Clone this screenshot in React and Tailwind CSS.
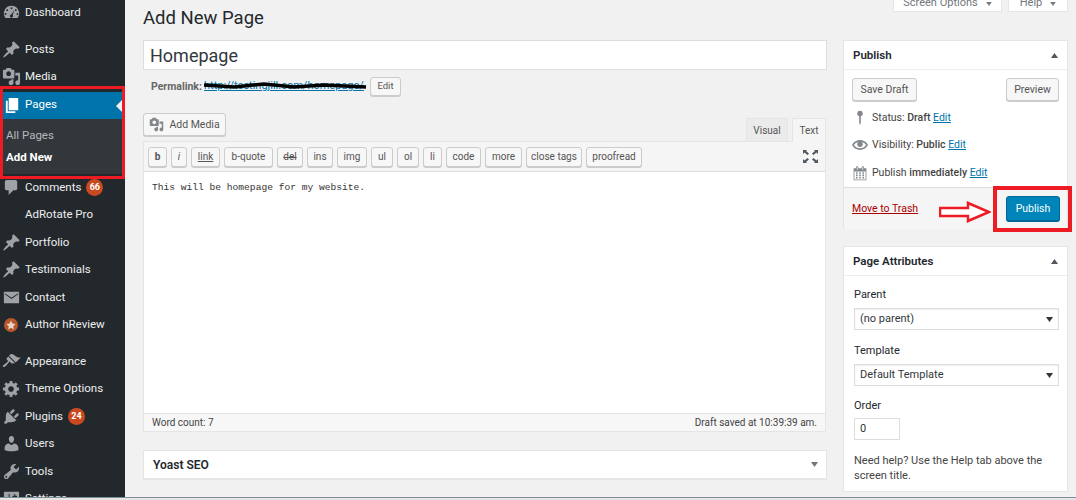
import React from 'react';

const paths = {
  dashboard: 'M10 3a8 8 0 0 0-6.400 12.800h12.800A8 8 0 0 0 10 3zm0 1.500a1 1 0 1 1 0 2 1 1 0 0 1 0-2zM5.500 6.500a1 1 0 1 1 0 2 1 1 0 0 1 0-2zm9 0a1 1 0 1 1 0 2 1 1 0 0 1 0-2zM3.700 10.500a1 1 0 1 1 0 2 1 1 0 0 1 0-2zm12.600 0a1 1 0 1 1 0 2 1 1 0 0 1 0-2zM13 7.500l-1.800 5a1.700 1.700 0 1 1-1.500-.5z',
  post: 'M10.440 3.020l1.820-1.820 6.360 6.350-1.830 1.820c-1.050-.68-2.480-.57-3.410.36l-.75.75c-.92.93-1.040 2.350-.35 3.410l-1.830 1.820-2.410-2.410-2.800 2.790c-.42.42-3.380 2.710-3.800 2.290s1.860-3.390 2.280-3.810l2.790-2.790L4.100 9.360l1.830-1.820c1.050.69 2.480.57 3.400-.36l.75-.75c.93-.92 1.050-2.350.36-3.410z',
  media: 'M13 11V4c0-.55-.45-1-1-1h-1.670L9 1H5L3.670 3H2c-.55 0-1 .45-1 1v7c0 .55.45 1 1 1h10c.55 0 1-.45 1-1zM7 4.500c1.380 0 2.500 1.120 2.500 2.500S8.380 9.500 7 9.500 4.500 8.380 4.500 7 5.620 4.500 7 4.500zM14 6h5v10.500c0 1.380-1.120 2.500-2.500 2.500S14 17.880 14 16.500s1.120-2.500 2.500-2.500c.17 0 .34.020.5.050V9h-3V6zm-4 8.050V13h2v3.500c0 1.380-1.120 2.500-2.500 2.500S7 17.880 7 16.500 8.120 14 9.500 14c.17 0 .34.020.5.050z',
  page: 'M6 15V2h10v13H6zm-1 1h8v2H3V5h2v11z',
  comments: 'M5 2h9c1.100 0 2 .9 2 2v7c0 1.100-.9 2-2 2h-2l-5 5v-5H5c-1.100 0-2-.9-2-2V4c0-1.100.9-2 2-2z',
  email: 'M2 4h16v12H2zM3 5.500v1.200l7 4.800 7-4.800V5.500l-7 4.700z',
  appearance: 'M14.480 11.060L7.410 3.990l1.500-1.500c.5-.56 2.300-.47 3.510.32 1.210.8 1.430 1.280 2.910 2.100 1.180.64 2.450 1.260 4.450.85zm-.71.71L6.700 4.700 4.930 6.470c-.39.39-.39 1.020 0 1.410l1.060 1.060c.39.39.39 1.030 0 1.420-.6.6-1.430 1.110-2.210 1.690-.35.26-.7.53-1.010.84C1.430 13.230.4 14.850 1.100 15.550c.71.7 2.310-.33 3.650-1.670.31-.31.58-.66.85-1.010.57-.79 1.080-1.610 1.690-2.210.39-.39 1.020-.39 1.410 0l1.060 1.060c.39.39 1.020.39 1.410 0z',
  gear: 'M18 12h-2.180c-.17.7-.44 1.350-.81 1.930l1.540 1.540-2.100 2.100-1.540-1.540c-.58.360-1.230.640-1.910.810V19H8v-2.180c-.68-.170-1.330-.450-1.910-.810l-1.540 1.540-2.120-2.120 1.540-1.540c-.36-.58-.64-1.230-.81-1.910H1V9.020h2.170c.170-.7.440-1.350.810-1.930L2.440 5.550l2.120-2.120L6.100 4.970c.580-.360 1.230-.640 1.910-.810V2h3v2.180c.68.170 1.330.450 1.910.810l1.540-1.540 2.120 2.120-1.540 1.540c.36.58.64 1.230.81 1.910H18V12zm-8.500 1.500c1.660 0 3-1.340 3-3s-1.340-3-3-3-3 1.340-3 3 1.340 3 3 3z',
  plugins: 'M13.110 4.360L9.870 7.600 8 5.730l3.240-3.240c.35-.34 1.050-.2 1.560.32.52.51.66 1.210.31 1.550zm-8 1.770l.91-1.120 9.010 9.010-1.190.84c-.71.71-2.630 1.160-3.820 1.160H6.140L4.900 17.260c-.59.59-1.540.59-2.120 0-.59-.58-.59-1.530 0-2.120l1.240-1.240v-3.880c0-1.130.4-3.190 1.090-3.890zm7.260 3.970l3.240-3.240c.34-.35 1.040-.21 1.550.31.52.51.66 1.210.31 1.550l-3.240 3.250z',
  users: 'M10 9.250c-2.270 0-2.730-3.440-2.730-3.440C7 4.020 7.820 2 9.970 2c2.160 0 2.980 2.020 2.710 3.810 0 0-.41 3.440-2.680 3.440zm0 2.570L12.720 10c2.390 0 4.520 2.330 4.520 4.530v2.490s-3.650 1.130-7.240 1.130c-3.650 0-7.240-1.130-7.240-1.130v-2.490c0-2.250 1.940-4.480 4.470-4.480z',
  tools: 'M16.680 9.770c-1.340 1.340-3.300 1.670-4.950.99l-5.410 6.520c-.99.99-2.590.99-3.580 0s-.99-2.590 0-3.570l6.520-5.420c-.68-1.650-.35-3.610.99-4.950 1.280-1.280 3.120-1.620 4.720-1.060l-2.890 2.890 2.820 2.820 2.860-2.870c.53 1.580.18 3.390-1.080 4.650zM3.810 16.210c.4.39 1.040.39 1.430 0 .4-.4.4-1.040 0-1.430-.39-.4-1.030-.4-1.430 0-.39.39-.39 1.030 0 1.430z',
  settings: 'M18 16V4c0-.55-.45-1-1-1H3c-.55 0-1 .45-1 1v12c0 .55.45 1 1 1h14c.55 0 1-.45 1-1zM8 11h1c.55 0 1 .45 1 1s-.45 1-1 1H8v1.500c0 .28-.22.5-.5.5s-.5-.22-.5-.5V13H6c-.55 0-1-.45-1-1s.45-1 1-1h1V5.500c0-.28.22-.5.5-.5s.5.22.5.5V11zm5-2h-1c-.55 0-1-.45-1-1s.45-1 1-1h1V5.500c0-.28.22-.5.5-.5s.5.22.5.5V7h1c.55 0 1 .45 1 1s-.45 1-1 1h-1v5.500c0 .28-.22.5-.5.5s-.5-.22-.5-.5V9z',
  pin: 'M10 1a3.500 3.500 0 0 1 1 6.860V16l-1 3-1-3V7.860A3.500 3.500 0 0 1 10 1z',
  eye: 'M19.700 9.400C17.700 6 14 3.900 10 3.900S2.300 6 .3 9.400L0 10l.3.6c2 3.400 5.700 5.500 9.700 5.500s7.700-2.100 9.700-5.500l.3-.6-.3-.6zM10 14.100c-3.100 0-6-1.600-7.700-4.100C3.600 8 5.700 6.600 8 6.100c-.9.6-1.500 1.700-1.500 2.900 0 1.900 1.600 3.500 3.500 3.500s3.500-1.600 3.500-3.500c0-1.200-.6-2.300-1.500-2.900 2.300.5 4.400 1.900 5.700 3.900-1.700 2.500-4.600 4.100-7.700 4.100z',
  calendar: 'M15 4h3v15H2V4h3V3c0-.41.15-.76.44-1.060.29-.29.65-.44 1.060-.44s.77.15 1.060.44c.29.3.44.65.44 1.060v1h4V3c0-.41.15-.76.44-1.060.29-.29.65-.44 1.060-.44s.77.15 1.060.44c.29.3.44.65.44 1.060v1zM6 3v2.500c0 .14.05.26.15.35.09.1.21.15.35.15s.26-.05.35-.15c.1-.09.15-.21.15-.35V3c0-.14-.05-.26-.15-.35-.09-.1-.21-.15-.35-.15s-.26.05-.35.15c-.1.09-.15.21-.15.35zm7 0v2.500c0 .14.05.26.14.35.1.1.22.15.36.15s.26-.05.36-.15c.09-.09.14-.21.14-.35V3c0-.14-.05-.26-.14-.35-.1-.1-.22-.15-.36-.15s-.26.05-.36.15c-.09.09-.14.21-.14.35zm4 15V8H3v10h14zM7 9v2H5V9h2zm2 0h2v2H9V9zm4 2V9h2v2h-2zm-6 1v2H5v-2h2zm2 0h2v2H9v-2zm4 2v-2h2v2h-2zm-6 1v2H5v-2h2zm4 2H9v-2h2v2zm4 0h-2v-2h2v2z',
};

function Dash({ name, size = 19, color = '#9ea3a8' }) {
  return (
    <svg width={size} height={size} viewBox="0 0 20 20" fill={color} fillRule="evenodd">
      <path d={paths[name]} />
    </svg>
  );
}

function Dot() {
  return (
    <div className="w-[14px] h-[14px] rounded-full bg-[#b5562b] flex items-center justify-center ml-[2px]">
      <svg width="10" height="10" viewBox="0 0 20 20" fill="#e8d4c8">
        <path d="M10 1l2.800 6 6.500.8-4.800 4.500 1.300 6.500L10 15.500l-5.800 3.300 1.300-6.500L.7 7.800 7.200 7z" />
      </svg>
    </div>
  );
}

const topItems = [
  { name: 'Posts', icon: <Dash name="post" /> },
  { name: 'Media', icon: <Dash name="media" /> },
];

const midItems = [
  { name: 'Comments', badge: '66', icon: <Dash name="comments" /> },
  { name: 'AdRotate Pro' },
  { name: 'Portfolio', icon: <Dash name="post" /> },
  { name: 'Testimonials', icon: <Dash name="post" /> },
  { name: 'Contact', icon: <Dash name="email" /> },
  { name: 'Author hReview', icon: <Dot /> },
];

const lowItems = [
  { name: 'Appearance', icon: <Dash name="appearance" /> },
  { name: 'Theme Options', icon: <Dash name="gear" /> },
  { name: 'Plugins', badge: '24', icon: <Dash name="plugins" /> },
  { name: 'Users', icon: <Dash name="users" /> },
  { name: 'Tools', icon: <Dash name="tools" /> },
  { name: 'Settings', icon: <Dash name="settings" /> },
];

const quicktags = [
  ['b', 'w-[19px] font-bold'],
  ['i', 'w-[16px] italic'],
  ['link', 'w-[29px] underline'],
  ['b-quote', 'w-[49px]'],
  ['del', 'w-[26px] line-through'],
  ['ins', 'w-[26px]'],
  ['img', 'w-[30px]'],
  ['ul', 'w-[22px]'],
  ['ol', 'w-[22px]'],
  ['li', 'w-[19px]'],
  ['code', 'w-[35px]'],
  ['more', 'w-[37px]'],
  ['close tags', 'w-[56px]'],
  ['proofread', 'w-[56px]'],
];

function MenuRow({ item }) {
  return (
    <div className="h-[27.5px] flex items-center text-[#eeeeee]">
      <div className="w-[25px] pl-[2px] flex justify-start shrink-0">{item.icon}</div>
      <span>{item.name}</span>
      {item.badge && (
        <span className="ml-[5px] h-[17px] w-[17px] rounded-full bg-[#ca4a1f] text-white text-[9px] font-bold flex items-center justify-center">
          {item.badge}
        </span>
      )}
    </div>
  );
}

function Btn({ className, children }) {
  return (
    <div className={`flex items-center justify-center bg-[#f7f7f7] border border-[#cccccc] rounded-[3px] shadow-[0_1px_0_#cccccc] text-[#555555] ${className}`}>
      {children}
    </div>
  );
}

function Select({ children, className }) {
  return (
    <div className={`h-[22px] w-[205px] bg-white border border-[#dddddd] shadow-[inset_0_1px_2px_rgba(0,0,0,0.07)] flex items-center justify-between pl-[5px] pr-[5px] pt-[1px] text-[#32373c] ${className}`}>
      <span>{children}</span>
      <svg width="7" height="5" viewBox="0 0 7 5"><path d="M0 0h7L3.500 5z" fill="#32373c" /></svg>
    </div>
  );
}

export default function App() {
  return (
    <div className="relative flex w-[1076px] h-[500px] overflow-hidden bg-[#f1f1f1] text-[11px] text-[#444444] font-['Roboto','Liberation_Sans',sans-serif]">
      {/* Sidebar */}
      <aside className="relative w-[125px] shrink-0 bg-[#23282d] text-[11.5px]">
        <div className="h-[27.5px] -mt-[1px] flex items-center text-[#eeeeee]">
          <div className="w-[25px] pl-[2px] shrink-0"><Dash name="dashboard" /></div>
          <span>Dashboard</span>
        </div>
        <div className="h-[9px]" />
        {topItems.map((item) => <MenuRow key={item.name} item={item} />)}
        <div className="h-[27px] mt-[1px] flex items-center bg-[#0073aa] text-white relative">
          <div className="w-[25px] pl-[3px] shrink-0"><Dash name="page" color="#ffffff" /></div>
          <span>Pages</span>
          <div className="absolute right-[3px] top-[8px] w-0 h-0 border-y-[6px] border-y-transparent border-r-[6px] border-r-[#f1f1f1]" />
        </div>
        <div className="h-[55px] bg-[#32373c] pl-[6px] pt-[6px]">
          <div className="h-[22px] flex items-center text-[#b4b9be]">All Pages</div>
          <div className="h-[22px] flex items-center text-white font-bold">Add New</div>
        </div>
        {midItems.map((item) => <MenuRow key={item.name} item={item} />)}
        <div className="h-[9px]" />
        {lowItems.map((item) => <MenuRow key={item.name} item={item} />)}

        {/* red annotation */}
        <div className="absolute left-0 top-[86px] w-[125px] h-[93px] border-[3px] border-[#ed1c24]" />
      </aside>

      <div className="flex pl-[18px] gap-[16px]">
        {/* Main column */}
        <main className="w-[684px] shrink-0">
          <h1 className="h-[40px] text-[18.5px] leading-[36px] text-[#23282d]">Add New Page</h1>
          <div className="h-[30px] bg-white border border-[#dddddd] flex items-center pl-[6px] text-[18px] text-[#32373c]">Homepage</div>
          <div className="h-[19px] mt-[7px] pl-[8px] flex items-center text-[#666666]">
            <span className="font-bold text-[10.500px] w-[53px] shrink-0">Permalink:</span>
            <span className="relative w-[163px] text-[#0073aa] underline text-[11px] whitespace-nowrap">
              http://testingjill.com/homepage/
              <svg className="absolute left-0 top-[3px]" width="163" height="10" viewBox="0 0 163 10">
                <path d="M0 4 L30 6 L60 3 L90 6 L120 4 L162 6" stroke="#000000" strokeWidth="3.500" fill="none" />
              </svg>
            </span>
            <Btn className="ml-[3px] w-[31px] h-[19px] text-[9.500px]">Edit</Btn>
          </div>

          <div className="mt-[17px] h-[28px] flex justify-between items-end">
            <Btn className="w-[83px] h-[23px] mb-[5px] gap-[5px] text-[10.500px]">
              <Dash name="media" size={15} color="#82878c" />
              Add Media
            </Btn>
            <div className="flex gap-[4px] mr-[1px] text-[10px]">
              <div className="w-[42px] h-[23px] bg-[#ebebeb] border border-[#e5e5e5] border-b-0 text-[#555555] flex items-center justify-center">Visual</div>
              <div className="w-[34px] h-[24px] bg-[#f5f5f5] border border-[#e5e5e5] border-b-0 text-[#555555] flex items-center justify-center -mb-px relative">Text</div>
            </div>
          </div>

          <div className="h-[291px] border border-[#e5e5e5] bg-white flex flex-col w-[683px]">
            <div className="h-[30px] shrink-0 bg-[#f5f5f5] border-b border-[#dddddd] flex items-center pl-[4px] pr-[7px] gap-[4px]">
              {quicktags.map(([label, cls]) => (
                <Btn key={label} className={`h-[20px] shrink-0 text-[10px] ${cls}`}>{label}</Btn>
              ))}
              <svg className="ml-auto" width="15" height="13" viewBox="0 0 15 13" fill="#50575e">
                <path d="M0 0h4L3 1l3 2.500-1.500 1.500L1.500 2.500 0 4zM15 0h-4l1 1-3 2.500 1.500 1.500 3-2.500L15 4zM0 13h4L3 12l3-2.500L4.500 8l-3 2.500L0 9zM15 13h-4l1-1-3-2.500L10.500 8l3 2.500L15 9z" />
              </svg>
            </div>
            <div className="flex-1 pl-[8px] pt-[9px] font-['Liberation_Mono',monospace] text-[9.600px] leading-[14px] text-[#333333]">
              This will be homepage for my website.
            </div>
            <div className="h-[18px] shrink-0 bg-[#f7f7f7] border-t border-[#e5e5e5] flex items-center justify-between px-[8px] text-[10px] text-[#444444]">
              <span>Word count: 7</span>
              <span>Draft saved at 10:39:39 am.</span>
            </div>
          </div>

          <div className="mt-[18px] h-[29px] bg-white border border-[#e5e5e5] shadow-[0_1px_1px_rgba(0,0,0,0.04)] flex items-center justify-between pl-[9px] pr-[8px] text-[12px] font-semibold text-[#23282d]">
            <span>Yoast SEO</span>
            <svg width="7" height="5" viewBox="0 0 7 5"><path d="M0 0h7L3.500 5z" fill="#72777c" /></svg>
          </div>
        </main>

        {/* Right column */}
        <div className="w-[225px] shrink-0">
          <div className="h-[12px] flex justify-end gap-[6px] mb-[28px]">
            <div className="w-[109px] bg-white border border-t-0 border-[#e5e5e5] text-[#72777c] flex items-end justify-center gap-[8px] overflow-hidden pb-[2px] leading-[13px]">
              Screen Options
              <svg className="mb-[3px]" width="6" height="4" viewBox="0 0 7 5"><path d="M0 0h7L3.500 5z" fill="#72777c" /></svg>
            </div>
            <div className="w-[60px] bg-white border border-t-0 border-[#e5e5e5] text-[#72777c] flex items-end justify-center gap-[8px] overflow-hidden pb-[2px] leading-[13px]">
              Help
              <svg className="mb-[3px]" width="6" height="4" viewBox="0 0 7 5"><path d="M0 0h7L3.500 5z" fill="#72777c" /></svg>
            </div>
          </div>

          <section className="relative h-[189px] bg-white border border-[#e5e5e5] flex flex-col text-[10.500px]">
            <div className="h-[29px] shrink-0 border-b border-[#eeeeee] flex items-center justify-between pl-[9px] pr-[9px] pt-[1px] text-[11.500px] font-semibold text-[#23282d]">
              <span>Publish</span>
              <svg width="7" height="5" viewBox="0 0 7 5"><path d="M0 5h7L3.500 0z" fill="#50575e" /></svg>
            </div>
            <div className="flex-1 pl-[8px] pr-[8px] pt-[8px]">
              <div className="flex justify-between">
                <Btn className="w-[65px] h-[23px]">Save Draft</Btn>
                <Btn className="w-[53px] h-[23px]">Preview</Btn>
              </div>
              <div className="mt-[3px] flex flex-col text-[#444444]">
                <div className="h-[27.500px] flex items-center">
                  <div className="w-[20px] shrink-0"><Dash name="pin" size={16} color="#82878c" /></div>
                  <span>Status: <b className="font-medium">Draft</b> <a className="text-[#0073aa] underline">Edit</a></span>
                </div>
                <div className="h-[27.500px] flex items-center">
                  <div className="w-[20px] shrink-0"><Dash name="eye" size={16} color="#82878c" /></div>
                  <span>Visibility: <b className="font-medium">Public</b> <a className="text-[#0073aa] underline">Edit</a></span>
                </div>
                <div className="h-[27.500px] flex items-center">
                  <div className="w-[20px] shrink-0"><Dash name="calendar" size={16} color="#82878c" /></div>
                  <span>Publish <b className="font-medium">immediately</b> <a className="text-[#0073aa] underline">Edit</a></span>
                </div>
              </div>
            </div>
            <div className="h-[42px] shrink-0 bg-[#f5f5f5] border-t border-[#dddddd] flex items-center justify-between pl-[8px] pr-[7px] pt-[1px]">
              <a className="text-[#a00] underline">Move to Trash</a>
              <div className="w-[54px] h-[25px] rounded-[3px] bg-[#0085ba] border border-[#006799] shadow-[0_1px_0_#006799] text-white flex items-center justify-center">Publish</div>
            </div>
            {/* red annotation */}
            <div className="absolute left-[149px] top-[145px] w-[79px] h-[46px] border-[4px] border-[#ed1c24]" />
            <svg className="absolute left-[95px] top-[160px]" width="52" height="22" viewBox="0 0 52 22">
              <path d="M1 7H29V2L50 11L29 20V15H1z" fill="#ffffff" stroke="#ed1c24" strokeWidth="2.500" />
            </svg>
          </section>

          <section className="mt-[17px] h-[246px] bg-white border border-[#e5e5e5]">
            <div className="h-[29px] border-b border-[#eeeeee] flex items-center justify-between pl-[9px] pr-[9px] pt-[1px] text-[11.500px] font-semibold text-[#23282d]">
              <span>Page Attributes</span>
              <svg width="7" height="5" viewBox="0 0 7 5"><path d="M0 5h7L3.500 0z" fill="#50575e" /></svg>
            </div>
            <div className="pl-[10px] pt-[11px] text-[#444444]">
              <div className="h-[15px] leading-[15px] text-[#23282d]">Parent</div>
              <Select className="mt-[6px]">(no parent)</Select>
              <div className="h-[15px] leading-[15px] mt-[13px] text-[#23282d]">Template</div>
              <Select className="mt-[6px]">Default Template</Select>
              <div className="h-[15px] leading-[15px] mt-[12px] text-[#23282d]">Order</div>
              <div className="mt-[5px] w-[46px] h-[22px] border border-[#dddddd] flex items-center pl-[5px] pt-[1px] text-[#32373c]">0</div>
              <p className="mt-[13px] w-[212px] leading-[15px]">Need help? Use the Help tab above the screen title.</p>
            </div>
          </section>
        </div>
      </div>

      {/* window edge at the bottom of the capture */}
      <div className="absolute left-0 bottom-[2px] w-full h-[1px] bg-[#7f8c99]" />
      <div className="absolute left-0 bottom-0 w-full h-[2px] bg-[#e6e6e6]" />
    </div>
  );
}
